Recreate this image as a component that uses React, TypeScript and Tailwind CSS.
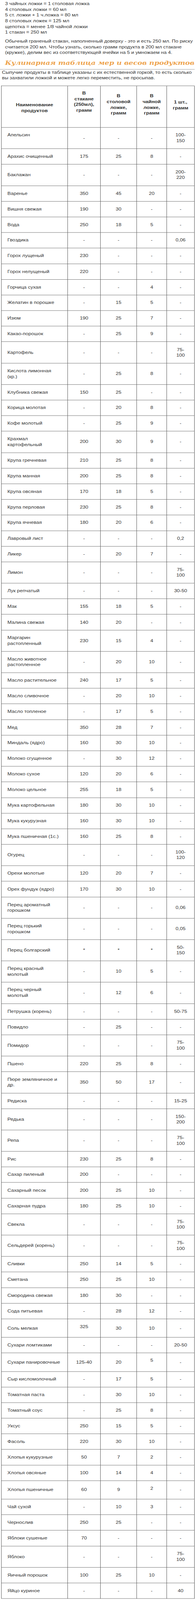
const FONT = { fontFamily: '"Liberation Sans", Arial, sans-serif' };

// name | stakan | stolovaya | chainaya | 1 sht
// "|" = line break, "^" = cell has an extra empty line below (row gets taller)
const ROWS: [string, string, string, string, string][] = [
  ["Апельсин|\u00a0", "-", "-", "-", "100-|150"],
  ["Арахис очищенный", "175", "25", "8", "-"],
  ["Баклажан", "-", "-", "-", "200-|220"],
  ["Варенье", "350", "45", "20", "-"],
  ["Вишня свежая", "190", "30", "-", "-"],
  ["Вода", "250", "18", "5", "-"],
  ["Гвоздика", "-", "-", "-", "0,06"],
  ["Горох лущеный", "230", "-", "-", "-"],
  ["Горох нелущеный", "220", "-", "-", "-"],
  ["Горчица сухая", "-", "-", "4", "-"],
  ["Желатин в порошке", "-", "15", "5", "-"],
  ["Изюм", "190", "25", "7", "-"],
  ["Какао-порошок", "-", "25", "9", "-"],
  ["Картофель", "-", "-", "-", "75-|100"],
  ["Кислота лимонная|(кр.)", "-", "25", "8", "-"],
  ["Клубника свежая", "150", "25", "-", "-"],
  ["Корица молотая", "-", "20", "8", "-"],
  ["Кофе молотый", "-", "25", "9", "-"],
  ["Крахмал|картофельный", "200", "30", "9", "-"],
  ["Крупа гречневая", "210", "25", "8", "-"],
  ["Крупа манная", "200", "25", "8", "-"],
  ["Крупа овсяная", "170", "18", "5", "-"],
  ["Крупа перловая", "230", "25", "8", "-"],
  ["Крупа ячневая", "180", "20", "6", "-"],
  ["Лавровый лист", "-", "-", "-", "0,2"],
  ["Ликер", "-", "20", "7", "-"],
  ["Лимон", "-", "-", "-", "75-|100"],
  ["Лук репчатый", "-", "-", "-", "30-50"],
  ["Мак", "155", "18", "5", "-"],
  ["Малина свежая", "140", "20", "-", "-"],
  ["Маргарин|растопленный", "230", "15", "4", "-"],
  ["Масло животное|растопленное", "-", "20", "10", "-"],
  ["Масло растительное", "240", "17", "5", "-"],
  ["Масло сливочное", "-", "20", "10", "-"],
  ["Масло топленое", "-", "17", "5", "-"],
  ["Мед", "350", "28", "7", "-"],
  ["Миндаль (ядро)", "160", "30", "10", "-"],
  ["Молоко сгущенное", "-", "30", "12", "-"],
  ["Молоко сухое", "120", "20", "6", "-"],
  ["Молоко цельное", "255", "18", "5", "-"],
  ["Мука картофельная", "180", "30", "10", "-"],
  ["Мука кукурузная", "160", "30", "10", "-"],
  ["Мука пшеничная (1с.)", "160", "25", "8", "-"],
  ["Огурец", "-", "-", "-", "100-|120"],
  ["Орехи молотые", "120", "20", "7", "-"],
  ["Орех фундук (ядро)", "170", "30", "10", "-"],
  ["Перец ароматный|горошком", "-", "-", "-", "0,06"],
  ["Перец горький|горошком", "-", "-", "-", "0,05"],
  ["Перец болгарский", "*", "*", "*", "50-|150"],
  ["Перец красный|молотый", "-", "10", "5", "-"],
  ["Перец черный|молотый", "-", "12", "6", "-"],
  ["Петрушка (корень)", "-", "-", "-", "50-75"],
  ["Повидло", "-", "25", "-", "-"],
  ["Помидор", "-", "-", "-", "75-|100"],
  ["Пшено", "220", "25", "8", "-"],
  ["Пюре земляничное и|др.", "350", "50", "17", "-"],
  ["Редиска", "-", "-", "-", "15-25"],
  ["Редька", "-", "-", "-", "150-|200"],
  ["Репа", "-", "-", "-", "75-|100"],
  ["Рис", "230", "25", "8", "-"],
  ["Сахар пиленый", "200", "-", "-", "-"],
  ["Сахарный песок", "200", "25", "10", "-"],
  ["Сахарная пудра", "180", "25", "10", "-"],
  ["Свекла", "-", "-", "-", "75-|100"],
  ["Сельдерей (корень)", "-", "-", "-", "75-|100"],
  ["Сливки", "250", "14", "5", "-"],
  ["Сметана", "250", "25", "10", "-"],
  ["Смородина свежая", "180", "30", "-", "-"],
  ["Сода питьевая", "-", "28", "12", "-"],
  ["Соль мелкая", "^325", "30", "10", "-"],
  ["Сухари ломтиками", "-", "-", "-", "20-50"],
  ["Сухари панировочные", "125-40", "20", "^5", "-"],
  ["Сыр кисломолочный", "-", "17", "5", "-"],
  ["Томатная паста", "-", "30", "10", "-"],
  ["Томатный соус", "-", "25", "8", "-"],
  ["Уксус", "250", "15", "5", "-"],
  ["Фасоль", "220", "30", "10", "-"],
  ["Хлопья кукурузные", "50", "7", "2", "-"],
  ["Хлопья овсяные", "100", "14", "4", "-"],
  ["Хлопья пшеничные", "60", "9", "^2", "-"],
  ["Чай сухой", "-", "10", "3", "-"],
  ["Чернослив", "250", "25", "-", "-"],
  ["Яблоки сушеные", "70", "-", "-", "-"],
  ["Яблоко", "-", "-", "-", "75-|100"],
  ["Яичный порошок", "100", "25", "10", "-"],
  ["Яйцо куриное", "-", "-", "-", "40"],
];

const HEAD = [
  { lines: ["Наименование", "продуктов"], pt: "pt-[51px]" },
  { lines: ["В", "стакане", "(250мл),", "грамм"], pt: "pt-[14px]" },
  { lines: ["В", "столовой", "ложке,", "грамм"], pt: "pt-[23px]" },
  { lines: ["В", "чайной", "ложке,", "грамм"], pt: "pt-[23px]" },
  { lines: ["1 шт.,", "грамм"], pt: "pt-[42px]" },
];

const GRID = "grid grid-cols-[170px_84px_93px_77px_71px]";

function rowHeight(r: string[]) {
  const double = r.some((c) => c.includes("|"));
  const raised = r.some((c) => c.startsWith("^"));
  if (double) return "h-[67.2px]";
  if (raised) return "h-[58.2px]";
  return "h-[49.2px]";
}

function CellText({ text }: { text: string }) {
  const raised = text.startsWith("^");
  const lines = (raised ? text.slice(1) : text).split("|");
  return (
    <div>
      {lines.map((l, i) => (
        <div key={i} className="h-[18px] whitespace-nowrap">
          {l}
        </div>
      ))}
      {raised && <div className="h-[9px]" />}
    </div>
  );
}

export default function App() {
  return (
    <div className="h-[4096px] w-[500px] overflow-hidden bg-white">
      <div
        className="w-[500px] origin-top scale-y-[0.8125] text-[13px] leading-[18px] text-[#333]"
        style={FONT}
      >
        <div className="pl-[13px] pt-[3px]">
          <p>3 чайных ложки = 1 столовая ложка</p>
          <p>4 столовых ложки = 60 мл</p>
          <p>5 ст. ложки + 1 ч.ложка = 80 мл</p>
          <p>8 столовых ложек = 125 мл</p>
          <p>щепотка = менее 1/8 чайной ложки</p>
          <p>1 стакан = 250 мл</p>
          <p className="mt-[10px] whitespace-nowrap">
            Обычный граненый стакан, наполненный доверху - это и есть 250 мл. По риску
            <br />
            считается 200 мл. Чтобы узнать, сколько грамм продукта в 200 мл стакане
            <br />
            (кружке), делим вес из соответствующей ячейки на 5 и умножаем на 4.
          </p>
          <h2
            className="mt-[11px] h-[24px] text-[18px] leading-[24px] font-bold italic text-[#eea34c] whitespace-nowrap"
            style={{ fontFamily: '"DejaVu Serif", "Liberation Serif", serif' }}
          >
            Кулинарная таблица мер и весов продуктов
          </h2>
        </div>

        <div className="mt-[8px] h-px w-[499px] bg-[#8a8a8a]" />

        <p className="pl-[5px] whitespace-nowrap">
          Сыпучие продукты в таблице указаны с их естественной горкой, то есть сколько
          <br />
          вы захватили ложкой и можете легко переместить, не просыпав.
        </p>

        <div className="ml-[3px] mt-[15px] w-[496px] border-l border-t border-[#555]">
          <div className={GRID}>
            {HEAD.map((h, i) => (
              <div
                key={i}
                className={`h-[131px] border-b border-r border-[#555] text-center font-bold ${h.pt}`}
              >
                {h.lines.map((l) => (
                  <div key={l} className="h-[18px]">
                    {l}
                  </div>
                ))}
              </div>
            ))}
          </div>

          {ROWS.map((r) => {
            const h = rowHeight(r);
            return (
              <div key={r[0]} className={GRID}>
                <div className={`flex flex-col justify-center border-b border-r border-[#555] pl-[15px] ${h}`}>
                  <CellText text={r[0]} />
                </div>
                {r.slice(1).map((v, i) => (
                  <div
                    key={i}
                    className={`flex flex-col items-center justify-center border-b border-r border-[#555] text-center ${h}`}
                  >
                    <CellText text={v} />
                  </div>
                ))}
              </div>
            );
          })}
        </div>
      </div>
    </div>
  );
}
